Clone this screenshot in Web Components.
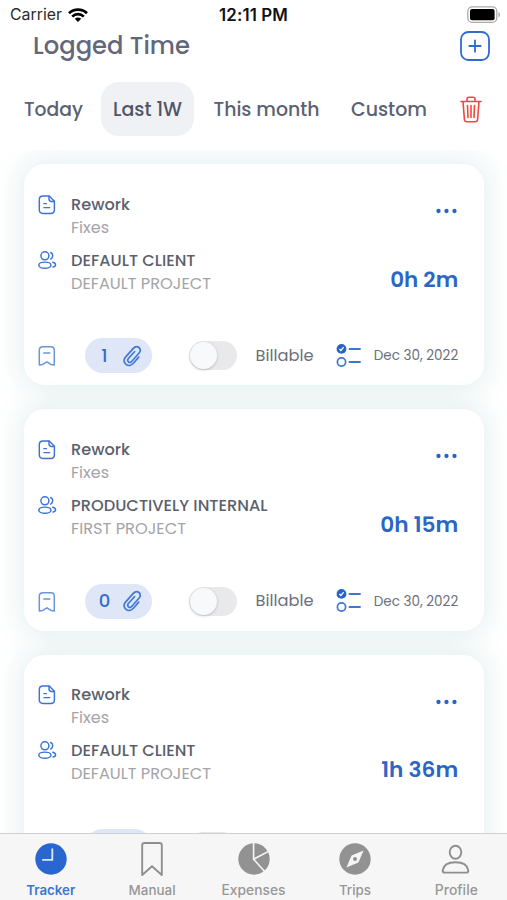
<!DOCTYPE html>
<html lang="en">
<head>
<meta charset="utf-8">
<title>Logged Time</title>
<style>
html,body{margin:0;height:100%;background:#fff;overflow:hidden}
body{font-family:Poppins,Inter,"Liberation Sans",sans-serif;color:#575c6e}
</style>
</head>
<body>
<time-app></time-app>
<script>
const define=(name,html,setup)=>customElements.define(name,class extends HTMLElement{
  connectedCallback(){
    if(this.shadowRoot)return;
    const t=document.createElement('template');
    t.innerHTML=typeof html==='function'?html(this):html;
    this.attachShadow({mode:'open'}).append(t.content.cloneNode(true));
    if(setup)setup(this);
  }
});

/* One line of text, sized so that it fills the width in "w". */
define('fit-text',`<style>:host{display:block;white-space:pre;flex:none}span{display:block;width:max-content}</style><span><slot></slot></span>`,el=>{
  const span=el.shadowRoot.querySelector('span'),w=+el.getAttribute('w');
  el.style.width=w+'px';
  const size=parseFloat(getComputedStyle(span).fontSize);
  span.style.fontSize=size*Math.min(1.09,w/span.getBoundingClientRect().width)+'px';
  const rest=w-span.getBoundingClientRect().width;
  span.style.letterSpacing=rest/(el.textContent.length-.5)+'px';
});

const icons={
 wifi:['0 0 20 14','<g fill="none" stroke="#000" stroke-width="2.7"><path d="M1 5.2C6 .3 14 .3 19 5.2M4.2 8.6c3.2-3.2 8.4-3.2 11.6 0"/></g><path d="M6.8 10.8a4.5 4.5 0 0 1 6.4 0L10 14z"/>'],
 battery:['0 0 34 18','<rect x=".8" y=".8" width="29" height="15.6" rx="4.4" fill="#fff" stroke="#aaa" stroke-width="1.3"/><rect x="3" y="3" width="24.6" height="11.2" rx="2"/><path d="M31.5 6v5.4c2-.7 2-4.700 0-5.400z" fill="#aaa"/>'],
 plus:['0 0 30 30','<g fill="none" stroke="#2f6bd0" stroke-width="1.8" stroke-linecap="round"><rect x="1" y="1" width="28" height="28" rx="7.5"/><path d="M15 9.300v11.400M9.300 15h11.400"/></g>'],
 trash:['0 0 22 27','<g fill="none" stroke="#f0483c" stroke-width="1.600" stroke-linecap="round" stroke-linejoin="round"><path d="M1 5.500h20M3 5.500l1.400 18q.2 2.200 2.300 2.200h8.600q2.100 0 2.300-2.200L19 5.500M7 5.300V3q0-1.800 1.800-1.800h4.400Q15 1.200 15 3v2.300M7.500 9.500l.5 12M11 9.500V21.500M14.500 9.500L14 21.500"/></g>'],
 file:['0 0 18 20','<g fill="none" stroke="#3b74d2" stroke-width="1.450" stroke-linejoin="round" stroke-linecap="round"><path d="M5 1h6.200L16.400 6.200v8.500q0 3.700-3.700 3.700H5Q1.300 18.400 1.300 14.700V4.700Q1.300 1 5 1z"/><path d="M11 1.200v2.900q0 2.400 2.400 2.400h2.900M5.900 8.600h2.500M5.900 12.600h5.800"/></g>'],
 users:['0 0 19 19','<g fill="none" stroke="#3b74d2" stroke-width="1.450" stroke-linecap="round"><circle cx="6.900" cy="4.800" r="4"/><ellipse cx="6.900" cy="14.200" rx="6.100" ry="3.100"/><path d="M12.700 1.500a3.700 3.700 0 0 1 0 6.600M14.800 11.200c3.700.9 3.500 4.100.3 4.800"/></g>'],
 note:['0 0 18 21','<g fill="none" stroke="#6a94dc" stroke-width="1.500" stroke-linejoin="round" stroke-linecap="round"><path d="M4.800 1.800h8q3.500 0 3.500 3.500v14.600l-3.400-.5-3.900-2.600-4.300 2.600-3.400.5V5.300q0-3.500 3.500-3.500zM5.800 8.100h6"/></g>'],
 clip:['0 0 20 22','<path d="M16.700 12.100l-5.300 6.100c-2.100 2.400-5.200 2.900-7.400 1.200-2.400-1.900-2.600-5-.5-7.300l7.800-8.700c1.700-1.900 4-2.300 5.700-.9 1.700 1.500 1.700 3.700.1 5.500l-7.200 8.200c-1.100 1.200-2.500 1.500-3.500.6-1-.9-.9-2.200.2-3.500l5.900-6.600" fill="none" stroke="#4079d5" stroke-width="1.700" stroke-linecap="round"/>'],
 check:['0 0 25 24','<circle cx="5.500" cy="4.900" r="4.900" fill="#2763c9"/><path d="M3.400 5l1.500 1.500L7.700 3.200" fill="none" stroke="#fff" stroke-width="1.200"/><circle cx="5.500" cy="18" r="4.100" fill="none" stroke="#3d77d3" stroke-width="1.700"/><path d="M13.500 5h10.500M13.500 18h10.500" stroke="#3d77d3" stroke-width="1.900" stroke-linecap="round"/>'],
 dots:['0 0 22 6','<g fill="#2763c4"><circle cx="2.500" cy="3" r="2.150"/><circle cx="10.500" cy="3" r="2.150"/><circle cx="18.500" cy="3" r="2.150"/></g>'],
 clock:['0 0 32 32','<circle cx="16" cy="16" r="15.700" fill="#2a66cf"/><path d="M17.300 5.500v11.400H7.200" fill="none" stroke="#dce8fb" stroke-width="1.800"/>'],
 mark:['0 0 32 36','<path d="M8.500 2h15q2.300 0 2.300 2.300V34L16 25.200 6.200 34V4.300Q6.200 2 8.500 2z" fill="none" stroke="#8f8f8f" stroke-width="1.900" stroke-linejoin="round"/>'],
 pie:['0 0 32 32','<circle cx="16" cy="16" r="15.700" fill="#929292"/><path d="M15.600 0v16.200L31 8.100M15.600 16.200L26.700 28.500" fill="none" stroke="#f6f6f6" stroke-width="1.600"/>'],
 compass:['0 0 32 32','<circle cx="16" cy="16" r="15.700" fill="#929292"/><path d="M24.600 7.400L19.400 19.400 7.400 24.600 12.600 12.600z" fill="#f6f6f6"/><circle cx="16" cy="16" r="2" fill="#929292"/>'],
 person:['0 0 32 32','<g fill="none" stroke="#8f8f8f" stroke-width="1.900"><ellipse cx="15.500" cy="9.300" rx="5.800" ry="6.500"/><path d="M4.900 29.600q-2.500 0-2.200-2.300C3.500 22.200 8.500 19.300 15.500 19.300s12 2.900 12.800 8q.3 2.300-2.200 2.300z"/></g>']
};
define('ui-icon',el=>{
  const [box,body]=icons[el.getAttribute('name')],[,,w,h]=box.split(' ');
  return `<style>:host{display:block;flex:none}svg{display:block}</style><svg viewBox="${box}" width="${w}" height="${h}">${body}</svg>`;
});

define('status-bar',`<style>
:host{display:grid;grid-template-columns:1fr auto 1fr;align-items:center;height:30px;padding:0 6px 0 10px;box-sizing:border-box;font:15.500px/30px Inter,sans-serif;color:#2b2b2b}
div{display:flex;align-items:center;gap:6px}
.mid{color:#111;font-weight:600;margin-right:4px}.end{justify-content:flex-end;padding-bottom:1px}
</style><div><fit-text w="52">Carrier</fit-text><ui-icon name="wifi"></ui-icon></div><fit-text class="mid" w="69">12:11 PM</fit-text><div class="end"><ui-icon name="battery"></ui-icon></div>`);

define('page-header',el=>`<style>
:host{display:flex;justify-content:space-between;height:32px;padding:0 17.500px 0 33px;font-size:24px;line-height:32px;font-weight:500;color:#63677b}
ui-icon{margin-top:1px}
</style><fit-text w="157">${el.getAttribute('label')}</fit-text><ui-icon name="plus"></ui-icon>`);

define('range-tabs',`<style>
:host{display:flex;align-items:center;height:54px;margin-top:20px;padding:0 25.500px 0 12px;font-size:18px;line-height:54px;font-weight:500;color:#5b6073}
div{padding:0 12px;height:54px;line-height:55.500px;border-radius:18px}.on{background:#eff1f5;color:#505568}
.on{margin:0 7.500px 0 6px}.last{margin-left:7.500px}ui-icon{margin-left:auto}
</style><div><fit-text w="59">Today</fit-text></div><div class="on"><fit-text w="69">Last 1W</fit-text></div><div><fit-text w="106">This month</fit-text></div><div class="last"><fit-text w="76">Custom</fit-text></div><ui-icon name="trash"></ui-icon>`);

define('toggle-switch',`<style>
:host{display:block;width:48px;height:29px;border-radius:15px;background:#e9e9eb;padding:1px;box-sizing:border-box;flex:none}
i{display:block;width:27px;height:27px;border-radius:50%;background:#f8f9fb;box-shadow:0 1px 3px #0003}
</style><i></i>`);

define('time-card',el=>{
  const a=n=>el.getAttribute(n);
  const f=(n,cls)=>{const [w,...t]=a(n).split('|');return `<fit-text class="${cls}" w="${w}">${t.join('|')}</fit-text>`};
  return `<style>
:host{display:flex;flex-direction:column;justify-content:space-between;flex:none;height:221.200px;box-sizing:border-box;padding:28.500px 26px 11.500px 14px;border-radius:21px;background:#fff;box-shadow:0 0 26px 5px rgba(70,150,150,.14)}
main{display:flex;justify-content:space-between}
.rows{display:grid;grid-template-columns:33px auto;row-gap:10px;font-size:15.500px;line-height:23px;font-weight:500}
.rows ui-icon{margin-top:2px}
.lead{color:#5b5f6d}.sub{color:#a4a4a7;font-weight:400}
aside{display:flex;flex-direction:column;align-items:flex-end;padding-top:15.500px}
.time{font-size:21.500px;line-height:30px;font-weight:600;color:#2b66c6;margin-top:50.500px}
footer{display:flex;align-items:center;height:36px;font-size:15.500px;line-height:36px;color:#6b6f7c}
.files{display:flex;align-items:center;justify-content:space-between;box-sizing:border-box;width:67px;height:35px;border-radius:18px;background:#dfe6f7;padding:0 10.500px 0 13.500px;margin:0 37px 0 29px;color:#326cce;font-size:18px;font-weight:500}
.files b{font:inherit;width:12px;text-align:center}
.bill{margin:0 22.500px 0 18.500px}.date{margin-left:auto;font-size:13.500px;line-height:37px}
</style>
<main><div class="rows"><ui-icon name="file"></ui-icon><div>${f('task','lead')}${f('detail','sub')}</div><ui-icon name="users"></ui-icon><div>${f('client','lead')}${f('project','sub')}</div></div>
<aside><ui-icon name="dots"></ui-icon>${f('time','time')}</aside></main>
<footer><ui-icon name="note"></ui-icon><div class="files"><b>${a('files')}</b><ui-icon name="clip"></ui-icon></div><toggle-switch></toggle-switch><fit-text class="bill" w="58">Billable</fit-text><ui-icon name="check"></ui-icon><fit-text class="date" w="84.500">Dec 30, 2022</fit-text></footer>`;
});

define('tab-item',el=>`<style>
:host{display:grid;grid-template-rows:50px 12px;justify-items:center;align-items:center;flex:1;font:500 13px/14px Inter,sans-serif;color:#979797;align-content:start}
:host([active]){color:#3c75d1;font-weight:600}
</style><ui-icon name="${el.getAttribute('icon')}"></ui-icon><fit-text w="${el.getAttribute('w')}">${el.getAttribute('label')}</fit-text>`);

define('tab-bar',`<style>:host{display:flex;height:67px;box-sizing:border-box;background:#f6f6f6;border-top:1.500px solid #cfcfcf;flex:none}</style>
<tab-item active icon="clock" label="Tracker" w="49"></tab-item><tab-item icon="mark" label="Manual" w="47"></tab-item><tab-item icon="pie" label="Expenses" w="64"></tab-item><tab-item icon="compass" label="Trips" w="32"></tab-item><tab-item icon="person" label="Profile" w="43"></tab-item>`);

define('time-app',`<style>
:host{display:flex;flex-direction:column;width:507px;height:900px;overflow:hidden;background:#fff}
section{flex:1;min-height:0;overflow:hidden;display:flex;flex-direction:column;gap:24.200px;padding:14px 22.800px 0 24px;margin-top:14px}
</style><status-bar></status-bar><page-header label="Logged Time"></page-header><range-tabs></range-tabs>
<section>
<time-card task="59|Rework" detail="38|Fixes" client="124.500|DEFAULT CLIENT" project="140|DEFAULT PROJECT" time="68|0h 2m" files="1"></time-card>
<time-card task="59|Rework" detail="38|Fixes" client="196.500|PRODUCTIVELY INTERNAL" project="115|FIRST PROJECT" time="78|0h 15m" files="0"></time-card>
<time-card task="59|Rework" detail="38|Fixes" client="124.500|DEFAULT CLIENT" project="140|DEFAULT PROJECT" time="77|1h 36m" files="1"></time-card>
</section><tab-bar></tab-bar>`);
</script>
</body>
</html>
